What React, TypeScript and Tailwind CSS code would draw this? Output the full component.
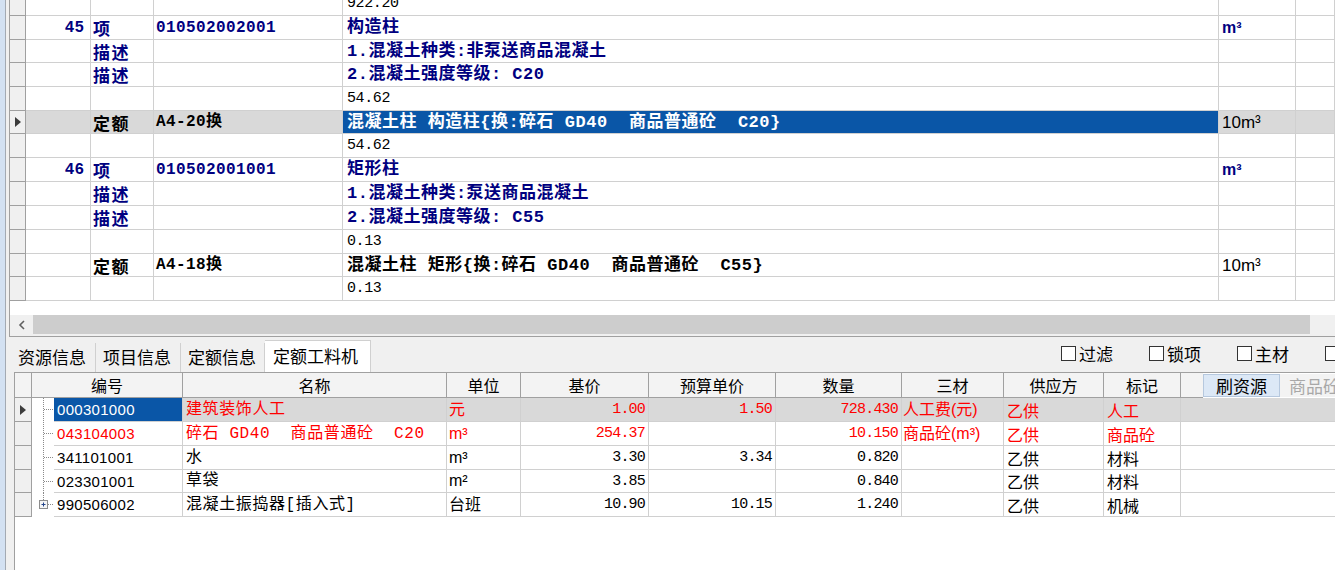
import React from "react";

type TopRow = {
  h: string;
  kind: "item" | "desc" | "qty" | "quota";
  c1?: string;
  c2?: string;
  c3?: string;
  c4?: string;
  c5?: string;
  sel?: boolean;
};

const topRows: TopRow[] = [
  { h: "h-[24px]", kind: "qty", c4: "922.20" },
  { h: "h-[24px]", kind: "item", c1: "45", c2: "项", c3: "010502002001", c4: "构造柱", c5: "m³" },
  { h: "h-[23px]", kind: "desc", c2: "描述", c4: "1.混凝土种类:非泵送商品混凝土" },
  { h: "h-[24px]", kind: "desc", c2: "描述", c4: "2.混凝土强度等级: C20" },
  { h: "h-[24px]", kind: "qty", c4: "54.62" },
  { h: "h-[23px]", kind: "quota", c2: "定额", c3: "A4-20换", c4: "混凝土柱 构造柱{换:碎石 GD40  商品普通砼  C20}", c5: "10m³", sel: true },
  { h: "h-[24px]", kind: "qty", c4: "54.62" },
  { h: "h-[24px]", kind: "item", c1: "46", c2: "项", c3: "010502001001", c4: "矩形柱", c5: "m³" },
  { h: "h-[24px]", kind: "desc", c2: "描述", c4: "1.混凝土种类:泵送商品混凝土" },
  { h: "h-[24px]", kind: "desc", c2: "描述", c4: "2.混凝土强度等级: C55" },
  { h: "h-[24px]", kind: "qty", c4: "0.13" },
  { h: "h-[23px]", kind: "quota", c2: "定额", c3: "A4-18换", c4: "混凝土柱 矩形{换:碎石 GD40  商品普通砼  C55}", c5: "10m³" },
  { h: "h-[24px]", kind: "qty", c4: "0.13" },
];

type MatRow = {
  h: string;
  code: string;
  name: string;
  unit: string;
  base: string;
  budget: string;
  qty: string;
  san: string;
  supply: string;
  mark: string;
  red?: boolean;
  sel?: boolean;
};

const matRows: MatRow[] = [
  { h: "h-[24px]", code: "000301000", name: "建筑装饰人工", unit: "元", base: "1.00", budget: "1.50", qty: "728.430", san: "人工费(元)", supply: "乙供", mark: "人工", red: true, sel: true },
  { h: "h-[24px]", code: "043104003", name: "碎石 GD40  商品普通砼  C20", unit: "m³", base: "254.37", budget: "", qty: "10.150", san: "商品砼(m³)", supply: "乙供", mark: "商品砼", red: true },
  { h: "h-[24px]", code: "341101001", name: "水", unit: "m³", base: "3.30", budget: "3.34", qty: "0.820", san: "", supply: "乙供", mark: "材料" },
  { h: "h-[23px]", code: "023301001", name: "草袋", unit: "m²", base: "3.85", budget: "", qty: "0.840", san: "", supply: "乙供", mark: "材料" },
  { h: "h-[24px]", code: "990506002", name: "混凝土振捣器[插入式]", unit: "台班", base: "10.90", budget: "10.15", qty: "1.240", san: "", supply: "乙供", mark: "机械" },
];

const mix = "font-['Liberation_Mono','Noto_Sans_CJK_SC',monospace]";
const unitFont = "font-['Liberation_Sans','Noto_Sans_CJK_SC',sans-serif]";
const cell = "shrink-0 border-r border-b border-[#d0d0d0] flex items-center overflow-hidden whitespace-pre leading-none";

function Arrow() {
  return (
    <svg width="6" height="10" viewBox="0 0 6 10">
      <polygon points="0,0 6,5 0,10" fill="#3c3c3c" />
    </svg>
  );
}

function TopGridRow({ r }: { r: TopRow }) {
  const bold = r.kind !== "qty";
  const color = r.kind === "item" || r.kind === "desc" ? "text-[#000080]" : "text-black";
  const selBg = r.sel ? "bg-[#d9d9d9]" : "";
  return (
    <div className={`flex ${r.h}`}>
      <div className="w-[16px] shrink-0 bg-[#f0f0f0] border-r border-b border-[#a0a0a0] flex items-center justify-center">
        {r.sel && <Arrow />}
      </div>
      <div className={`${cell} ${selBg} w-[65px] justify-end pr-[6px] ${mix} font-bold text-[16px] ${color}`}>{r.c1}</div>
      <div className={`${cell} ${selBg} w-[63px] pl-[2px] font-['Noto_Sans_CJK_SC',sans-serif] font-bold text-[17px] tracking-[1.5px] ${color}`}>{r.c2}</div>
      <div className={`${cell} ${selBg} w-[189px] pl-[2px] ${mix} font-bold text-[16px] tracking-[0.4px] ${color}`}>{r.c3}</div>
      <div
        className={`${cell} w-[876px] pl-[4px] ${mix} ${
          r.sel ? "bg-[#0a56a7] text-white" : color
        } ${bold ? "font-bold text-[17px] tracking-[0.5px]" : "text-[15px] tracking-[-0.4px]"}`}
      >
        {r.c4}
      </div>
      <div
        className={`${cell} ${selBg} w-[77px] pl-[3px] ${unitFont} ${
          r.kind === "quota" ? "text-[17px] text-black" : "font-bold text-[16px] text-[#000080]"
        }`}
      >
        {r.c5}
      </div>
      <div className={`${cell} ${selBg} flex-1 min-w-0`} />
    </div>
  );
}

function Tree({ last }: { last: boolean }) {
  return (
    <svg width="22" height="24" className="shrink-0">
      {last ? (
        <>
          <line x1="11.5" y1="0" x2="11.5" y2="7" stroke="#8a8a8a" strokeDasharray="1 1" />
          <rect x="7.5" y="7.5" width="8" height="8" fill="#f5f5f5" stroke="#8c8c8c" />
          <line x1="9.5" y1="11.5" x2="13.5" y2="11.5" stroke="#23448a" />
          <line x1="11.5" y1="9.5" x2="11.5" y2="13.5" stroke="#23448a" />
          <line x1="16" y1="11.5" x2="22" y2="11.5" stroke="#8a8a8a" strokeDasharray="1 1" />
        </>
      ) : (
        <>
          <line x1="11.5" y1="0" x2="11.5" y2="24" stroke="#8a8a8a" strokeDasharray="1 1" />
          <line x1="12" y1="11.5" x2="22" y2="11.5" stroke="#8a8a8a" strokeDasharray="1 1" />
        </>
      )}
    </svg>
  );
}

function MatGridRow({ r, last }: { r: MatRow; last: boolean }) {
  const bg = r.sel ? "bg-[#d9d9d9]" : "bg-white";
  const color = r.red ? "text-[#ff0000]" : "text-black";
  const txt = `text-[16px] ${color}`;
  const num = `${cell} justify-end pr-[3px] font-['Liberation_Mono',monospace] text-[15px] tracking-[-0.8px] ${color}`;
  return (
    <div className={`flex ${r.h} ${bg}`}>
      <div className="w-[17px] shrink-0 bg-[#f0f0f0] border-r border-b border-[#a0a0a0] flex items-center justify-center">
        {r.sel && <Arrow />}
      </div>
      <div className="w-[22px] shrink-0 overflow-hidden bg-white">
        <Tree last={last} />
      </div>
      <div
        className={`${cell} w-[129px] pl-[3px] font-['Liberation_Sans',sans-serif] text-[15px] tracking-[0.3px] ${
          r.sel ? "bg-[#0a56a7] text-white" : color
        }`}
      >
        {r.code}
      </div>
      <div className={`${cell} w-[264px] pl-[3px] ${mix} ${txt} tracking-[0.6px]`}>{r.name}</div>
      <div className={`${cell} w-[74px] pl-[2px] ${unitFont} ${txt}`}>{r.unit}</div>
      <div className={`${num} w-[128px]`}>{r.base}</div>
      <div className={`${num} w-[127px]`}>{r.budget}</div>
      <div className={`${num} w-[126px]`}>{r.qty}</div>
      <div className={`${cell} w-[102px] pl-[1px] ${unitFont} ${txt}`}>{r.san}</div>
      <div className={`${cell} w-[100px] pl-[3px] ${txt}`}>{r.supply}</div>
      <div className={`${cell} w-[77px] pl-[3px] ${txt}`}>{r.mark}</div>
      <div className="flex-1 min-w-0 border-b border-[#d0d0d0]" />
    </div>
  );
}

const headers: { label: string; w: string }[] = [
  { label: "编号", w: "w-[151px]" },
  { label: "名称", w: "w-[264px]" },
  { label: "单位", w: "w-[74px]" },
  { label: "基价", w: "w-[128px]" },
  { label: "预算单价", w: "w-[127px]" },
  { label: "数量", w: "w-[126px]" },
  { label: "三材", w: "w-[102px]" },
  { label: "供应方", w: "w-[100px]" },
  { label: "标记", w: "w-[77px]" },
];

function Check({ label }: { label: string }) {
  return (
    <div className="w-[88px] shrink-0 flex items-center gap-[3px]">
      <div className="w-[15px] h-[15px] shrink-0 border border-[#333] bg-white" />
      <span className="text-[17px] leading-none">{label}</span>
    </div>
  );
}

export default function App() {
  return (
    <div className="w-[1335px] h-[570px] overflow-hidden flex bg-[#f0f0f0] text-black font-['Noto_Sans_CJK_SC',sans-serif]">
      <div className="w-[6px] shrink-0 bg-[#d3e1f2] border-r border-[#a3aab3]" />

      <div className="flex-1 min-w-0 flex flex-col">
        {/* upper grid: bill items */}
        <div className="h-[315px] shrink-0 ml-[3px] border-l border-[#a0a0a0] bg-white overflow-hidden">
          <div className="mt-[-8px]">
            {topRows.map((r, i) => (
              <TopGridRow key={i} r={r} />
            ))}
          </div>
        </div>

        {/* horizontal scrollbar */}
        <div className="h-[22px] shrink-0 ml-[3px] border-l border-b border-[#a0a0a0] flex items-start bg-[#f0f0f0]">
          <div className="w-[23px] h-[19px] shrink-0 flex items-center justify-center">
            <svg width="8" height="10" viewBox="0 0 8 10">
              <polyline points="6,1 2,5 6,9" fill="none" stroke="#606060" strokeWidth="1.6" />
            </svg>
          </div>
          <div className="w-[1277px] h-[19px] shrink-0 bg-[#cdcdcd]" />
          <div className="flex-1" />
        </div>

        {/* tabs + filters */}
        <div className="h-[35px] shrink-0 ml-[8px] flex items-end">
          <div className="w-[82px] h-[29px] shrink-0 border-r border-[#d0d0d0] flex items-center pl-[4px] pb-[3px] text-[17px] leading-none">资源信息</div>
          <div className="w-[85px] h-[29px] shrink-0 border-r border-[#d0d0d0] flex items-center pl-[7px] pb-[3px] text-[17px] leading-none">项目信息</div>
          <div className="w-[84px] h-[29px] shrink-0 border-r border-[#d0d0d0] flex items-center pl-[7px] pb-[3px] text-[17px] leading-none">定额信息</div>
          <div className="w-[106px] h-[32px] shrink-0 bg-white border-t border-r border-[#d0d0d0] flex items-center pl-[8px] pb-[3px] text-[17px] leading-none">定额工料机</div>
          <div className="ml-[690px] self-start mt-[8px] h-[16px] flex items-center">
            <Check label="过滤" />
            <Check label="锁项" />
            <Check label="主材" />
            <Check label="" />
          </div>
        </div>

        {/* lower grid: labour, materials, machines */}
        <div className="flex-1 min-h-0 ml-[8px] border-l border-t border-[#a0a0a0] bg-white overflow-hidden">
          <div className="flex h-[25px]">
            <div className="w-[17px] shrink-0 bg-[#f3f3f3] border-r border-b border-[#a0a0a0]" />
            {headers.map((h) => (
              <div
                key={h.label}
                className={`${h.w} shrink-0 bg-[#f3f3f3] border-r border-b border-[#a0a0a0] flex items-center justify-center text-[16px] leading-none`}
              >
                {h.label}
              </div>
            ))}
            <div className="w-[22px] shrink-0 bg-[#f3f3f3] border-b border-[#a0a0a0]" />
            <div className="w-[77px] h-[23px] shrink-0 mt-[1px] bg-[#dce8f6] border border-[#b6c8de] flex items-center justify-center text-[17px] leading-none">刷资源</div>
            <div className="flex-1 min-w-0 h-[23px] mt-[1px] bg-[#f3f3f3] flex items-center pl-[9px] text-[17px] leading-none text-[#a8a8a8] whitespace-nowrap">商品砼</div>
          </div>
          {matRows.map((r, i) => (
            <MatGridRow key={r.code} r={r} last={i === matRows.length - 1} />
          ))}
        </div>
      </div>
    </div>
  );
}
